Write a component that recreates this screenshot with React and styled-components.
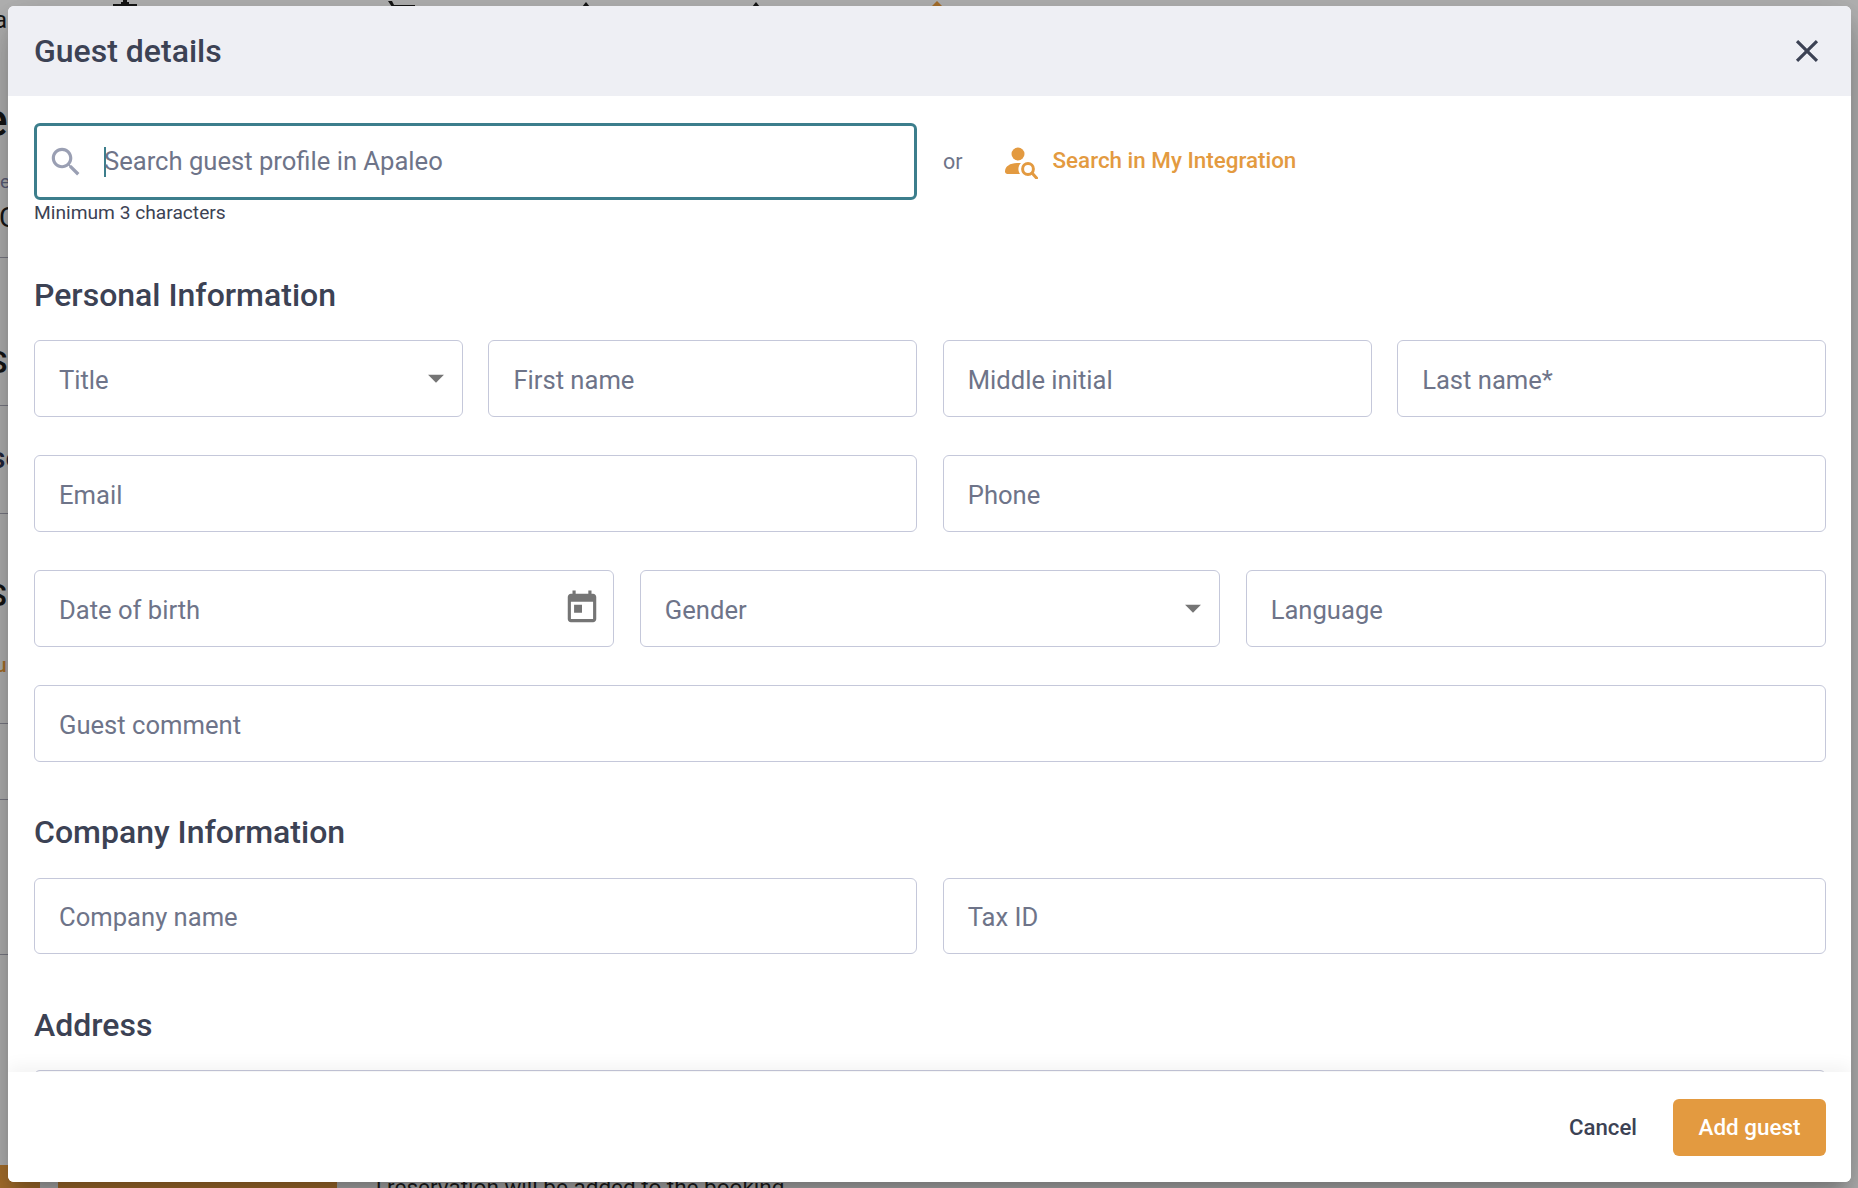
import React from "react";
import styled, { createGlobalStyle } from "styled-components";

const Global = createGlobalStyle`
  html, body { margin: 0; padding: 0; height: 100%; overflow: hidden; }
  body { font-family: Roboto, "Liberation Sans", sans-serif; }
  #root { height: 100%; }
`;

const Page = styled.div`
  position: relative;
  width: 100%;
  height: 1188px;
  overflow: hidden;
  background: #b3b3b3;
`;

const Fragment = styled.span`
  position: absolute;
  top: ${(p) => p.$y}px;
  left: ${(p) => p.$x}px;
  font-size: ${(p) => p.$size}px;
  line-height: 1;
  font-weight: ${(p) => p.$weight || 400};
  color: ${(p) => p.$color || "#161616"};
  white-space: nowrap;
`;

const Rule = styled.div`
  position: absolute;
  top: ${(p) => p.$y}px;
  left: 0;
  width: 12px;
  height: 1px;
  background: #7b7b85;
`;

const Bar = styled.div`
  position: absolute;
  top: 1165px;
  left: ${(p) => p.$x}px;
  width: ${(p) => p.$w}px;
  height: 23px;
  background: #a8702c;
`;

const TopGlyph = styled.svg`
  position: absolute;
  top: 0;
  left: ${(p) => p.$x}px;
`;

const Modal = styled.div`
  position: absolute;
  top: 6px;
  left: 8px;
  width: 1843px;
  height: 1176px;
  display: flex;
  flex-direction: column;
  overflow: hidden;
  background: #fff;
  border-radius: 6px;
  box-shadow: 0 11px 15px -7px rgba(0, 0, 0, 0.2), 0 24px 38px 3px rgba(0, 0, 0, 0.14), 0 9px 46px 8px rgba(0, 0, 0, 0.12);
`;

const Header = styled.header`
  flex: 0 0 90px;
  display: flex;
  align-items: center;
  justify-content: space-between;
  padding: 0 25px 0 26px;
  background: #eeeff4;
`;

const Title = styled.h1`
  margin: 0;
  font-size: 32px;
  font-weight: 500;
  color: #3c4254;
`;

const CloseButton = styled.button`
  display: flex;
  width: 38px;
  height: 38px;
  padding: 0;
  border: 0;
  background: none;
  color: #3c4254;
`;

const Body = styled.div`
  flex: 1;
  min-height: 0;
  overflow: hidden;
  padding: 27px 25px 0 26px;
`;

const SearchRow = styled.div`
  display: grid;
  grid-template-columns: repeat(2, 1fr);
  column-gap: 26px;
`;

const SearchBox = styled.div`
  box-sizing: border-box;
  height: 77px;
  display: flex;
  align-items: center;
  padding-left: 10px;
  border: 3px solid #3c7e8c;
  border-radius: 6px;
  color: #9a9fb3;
  line-height: 1;
`;

const Caret = styled.i`
  flex: none;
  width: 2px;
  height: 30px;
  margin-left: 19px;
  margin-right: -2px;
  background: #3c7e8c;
`;

const FieldText = styled.span`
  font-size: 25.6px;
  color: #6e7489;
  white-space: nowrap;
`;

const Helper = styled.div`
  margin-top: 1px;
  font-size: 19.2px;
  line-height: 24px;
  color: #3c4254;
`;

const SearchAside = styled.div`
  height: 77px;
  display: flex;
  align-items: center;
`;

const Or = styled.span`
  font-size: 21.5px;
  color: #6e7489;
  margin-right: 41px;
`;

const IntegrationLink = styled.a`
  display: flex;
  align-items: center;
  gap: 15px;
  margin-top: -4px;
  font-size: 22.4px;
  font-weight: 500;
  color: #e39a40;
  & > svg {
    margin-top: 6px;
  }
`;

const SectionTitle = styled.h2`
  margin: ${(p) => p.$top}px 0 ${(p) => p.$bottom}px;
  font-size: 32px;
  line-height: 36px;
  font-weight: 500;
  color: #3c4254;
`;

const FieldGrid = styled.div`
  display: grid;
  grid-template-columns: repeat(${(p) => p.$cols}, 1fr);
  column-gap: 25.5px;
  margin-bottom: ${(p) => p.$gap ?? 38.5}px;
`;

const Field = styled.div`
  box-sizing: border-box;
  height: 76.5px;
  display: flex;
  align-items: center;
  justify-content: space-between;
  padding: 0 ${(p) => p.$pr ?? 25}px 0 24px;
  border: 1px solid #c5c8da;
  border-radius: 6px;
  & > span {
    padding-top: 3px;
  }
`;

const Glyph = styled.svg`
  flex: none;
  fill: ${(p) => p.$color || "currentColor"};
`;

const Footer = styled.footer`
  position: relative;
  flex: 0 0 110px;
  box-sizing: border-box;
  display: flex;
  align-items: center;
  justify-content: flex-end;
  gap: 36px;
  padding: 1px 25px 0 0;
  background: #fff;
  box-shadow: 0 -6px 16px rgba(0, 0, 0, 0.05);
`;

const CancelButton = styled.button`
  padding: 0 0 2px;
  border: 0;
  background: none;
  font: 500 22.2px Roboto, sans-serif;
  color: #3c4254;
`;

const AddButton = styled.button`
  width: 153px;
  height: 57px;
  padding: 0 0 2px;
  border: 0;
  border-radius: 6px;
  background: #e39a40;
  font: 500 22.4px Roboto, sans-serif;
  color: #fff;
`;

const Close = () => (
  <Glyph width="38" height="38" viewBox="0 0 24 24">
    <path d="M19 6.41 17.59 5 12 10.59 6.41 5 5 6.41 10.59 12 5 17.59 6.41 19 12 13.41 17.59 19 19 17.59 13.41 12z" />
  </Glyph>
);
const Search = () => (
  <Glyph width="38" height="38" viewBox="0 0 24 24">
    <path d="M15.5 14h-.79l-.28-.27C15.41 12.59 16 11.11 16 9.5 16 5.91 13.09 3 9.5 3S3 5.91 3 9.5 5.91 16 9.5 16c1.61 0 3.09-.59 4.23-1.57l.27.28v.79l5 4.99L20.49 19l-4.99-5zm-6 0C7.01 14 5 11.99 5 9.5S7.01 5 9.5 5 14 7.01 14 9.5 11.99 14 9.5 14z" />
  </Glyph>
);
const ArrowDrop = () => (
  <Glyph width="38" height="38" viewBox="0 0 24 24" $color="#757575">
    <path d="m7 10 5 5 5-5z" />
  </Glyph>
);
const Today = () => (
  <Glyph width="38" height="38" viewBox="0 0 24 24" $color="#757575">
    <path d="M19 3h-1V1h-2v2H8V1H6v2H5c-1.11 0-1.99.9-1.99 2L3 19c0 1.1.89 2 2 2h14c1.1 0 2-.9 2-2V5c0-1.1-.9-2-2-2zm0 16H5V8h14v11zM7 10h5v5H7z" />
  </Glyph>
);
const PersonSearch = () => (
  <svg width="34" height="32" viewBox="0 0 34 32" fill="#e39a40">
    <circle cx="14" cy="7" r="6.5" />
    <path d="M1 24.5C1 19.5 6 16 13 16h4c-3 3-3.5 7.5-1 11H3.5C2 27 1 26 1 24.5z" />
    <circle cx="24" cy="22" r="5.4" fill="none" stroke="#e39a40" strokeWidth="3" />
    <path d="M28 26l4.5 5" fill="none" stroke="#e39a40" strokeWidth="3" strokeLinecap="round" />
  </svg>
);

const Placeholder = ({ children, trailing, pr }) => (
  <Field $pr={pr}>
    <FieldText>{children}</FieldText>
    {trailing}
  </Field>
);

export default function App() {
  return (
    <Page>
      <Global />
      <Fragment $x={-6} $y={8} $size={24}>a</Fragment>
      <Fragment $x={-17} $y={97} $size={46} $weight={500}>e</Fragment>
      <Fragment $x={0} $y={172} $size={19} $color="#5c5f78">e</Fragment>
      <Fragment $x={-1} $y={204} $size={28}>C</Fragment>
      <Fragment $x={-12} $y={346} $size={32} $weight={500}>S</Fragment>
      <Fragment $x={-10} $y={443} $size={30} $weight={500} $color="#22253a">se</Fragment>
      <Fragment $x={-12} $y={580} $size={31} $weight={500}>S</Fragment>
      <Fragment $x={-5} $y={655} $size={21} $weight={500} $color="#a8702c">u</Fragment>
      <Rule $y={257} />
      <Rule $y={405} />
      <Rule $y={513} />
      <Rule $y={723} />
      <Rule $y={799} />
      <Rule $y={954} />
      <Bar $x={0} $w={40} />
      <Bar $x={58} $w={279} />
      <Fragment $x={376} $y={1176} $size={22.5} $color="#1c1c1c">l reservation will be added to the booking</Fragment>
      <TopGlyph $x={113} width="24" height="7" viewBox="0 0 24 7" fill="#161616"><path d="M0 7V4h8V2h2V0h4v2h2v2h8v3z" /></TopGlyph>
      <TopGlyph $x={387} width="28" height="10" viewBox="0 0 28 10" fill="#161616"><path d="M1 1h4l2 4h21v2H5z" /></TopGlyph>
      <TopGlyph $x={582} width="8" height="7" viewBox="0 0 8 7" fill="#161616"><path d="M0 7l4-5 4 5z" /></TopGlyph>
      <TopGlyph $x={752} width="8" height="7" viewBox="0 0 8 7" fill="#161616"><path d="M0 7l4-5 4 5z" /></TopGlyph>
      <TopGlyph $x={931} width="12" height="7" viewBox="0 0 12 7" fill="#a8702c"><path d="M0 7l6-6 6 6z" /></TopGlyph>

      <Modal role="dialog">
        <Header>
          <Title>Guest details</Title>
          <CloseButton aria-label="Close"><Close /></CloseButton>
        </Header>
        <Body>
          <SearchRow>
            <div>
              <SearchBox>
                <Search />
                <Caret />
                <FieldText>Search guest profile in Apaleo</FieldText>
              </SearchBox>
              <Helper>Minimum 3 characters</Helper>
            </div>
            <SearchAside>
              <Or>or</Or>
              <IntegrationLink>
                <PersonSearch />
                Search in My Integration
              </IntegrationLink>
            </SearchAside>
          </SearchRow>

          <SectionTitle $top={52} $bottom={27}>Personal Information</SectionTitle>
          <FieldGrid $cols={4}>
            <Placeholder pr={7} trailing={<ArrowDrop />}>Title</Placeholder>
            <Placeholder>First name</Placeholder>
            <Placeholder>Middle initial</Placeholder>
            <Placeholder>Last name*</Placeholder>
          </FieldGrid>
          <FieldGrid $cols={2}>
            <Placeholder>Email</Placeholder>
            <Placeholder>Phone</Placeholder>
          </FieldGrid>
          <FieldGrid $cols={3}>
            <Placeholder pr={12} trailing={<Today />}>Date of birth</Placeholder>
            <Placeholder pr={7} trailing={<ArrowDrop />}>Gender</Placeholder>
            <Placeholder>Language</Placeholder>
          </FieldGrid>
          <FieldGrid $cols={1} $gap={0}>
            <Placeholder>Guest comment</Placeholder>
          </FieldGrid>

          <SectionTitle $top={52} $bottom={28}>Company Information</SectionTitle>
          <FieldGrid $cols={2} $gap={0}>
            <Placeholder>Company name</Placeholder>
            <Placeholder>Tax ID</Placeholder>
          </FieldGrid>

          <SectionTitle $top={53} $bottom={27}>Address</SectionTitle>
          <FieldGrid $cols={1}>
            <Placeholder>Address line</Placeholder>
          </FieldGrid>
        </Body>
        <Footer>
          <CancelButton>Cancel</CancelButton>
          <AddButton>Add guest</AddButton>
        </Footer>
      </Modal>
    </Page>
  );
}
